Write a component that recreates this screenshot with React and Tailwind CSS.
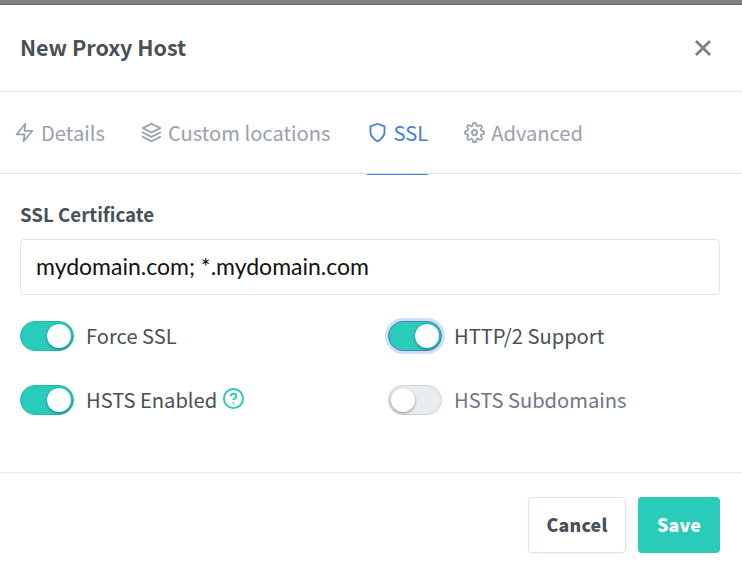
import { FiZap, FiLayers, FiShield, FiSettings, FiHelpCircle } from "react-icons/fi";

function Tab({ icon: Icon, label, active, className }) {
  return (
    <button
      className={`-mb-[2px] flex h-[83px] items-center border-b pb-[1px] text-[20.15px] ${
        active ? "border-[#467fcf] text-[#467fcf]" : "border-transparent text-[#9aa0ac]"
      } ${className}`}
    >
      <Icon className="size-[21px] shrink-0" />
      <span className="mt-[2px] ml-[6px] whitespace-nowrap">{label}</span>
    </button>
  );
}

function Toggle({ label, on, focused, children }) {
  const track = on
    ? focused
      ? "justify-end border-[#467fcf] bg-[#2bcbba] shadow-[0_0_0_3px_rgba(70,127,207,0.25)]"
      : "justify-end border-[#27b7a8] bg-[#2bcbba]"
    : "justify-start border-[#cdd3de] bg-[#e9ecef]";
  return (
    <label className="flex h-[30px] items-center">
      <span className={`flex h-[30px] w-[54px] shrink-0 items-center rounded-full border px-[2px] ${track}`}>
        <span className="mb-px size-6 rounded-full bg-white shadow-[0_1px_3px_rgba(0,0,0,0.4)]" />
      </span>
      <span
        className={`ml-3 whitespace-nowrap text-[20.15px] leading-[30px] ${on ? "text-[#495057]" : "text-[#6e7687]"}`}
      >
        {label}
      </span>
      {children}
    </label>
  );
}

export default function App() {
  return (
    <div className="flex h-[564px] w-[742px] flex-col overflow-hidden bg-white font-['Noto_Sans_CJK_SC',sans-serif] text-[#495057]">
      <div className="h-[5px] shrink-0 border-b border-[#666] bg-[#808080]" />
      <header className="flex h-[87px] shrink-0 items-center justify-between border-b border-[#e9ecef] pr-[31px] pl-5">
        <h1 className="mb-[2px] text-[21.5px] leading-8 font-bold">New Proxy Host</h1>
        <button aria-label="Close">
          <svg className="h-4 w-4" viewBox="0 0 16 16" fill="none" stroke="#808080" strokeWidth="2.8">
            <path d="M1 1 15 15M15 1 1 15" />
          </svg>
        </button>
      </header>
      <nav className="flex h-[82px] shrink-0 border-b border-[#dee2e6] pl-[14px]">
        <Tab icon={FiZap} label="Details" />
        <Tab icon={FiLayers} label="Custom locations" className="ml-[36px]" />
        <Tab icon={FiShield} label="SSL" active className="ml-[36px]" />
        <Tab icon={FiSettings} label="Advanced" className="ml-[36px]" />
      </nav>
      <main className="flex h-[298px] shrink-0 flex-col px-5 pt-[26px]">
        <h2 className="text-[18.7px] leading-[28px] font-bold">SSL Certificate</h2>
        <div className="mt-[11px] mr-[2px] flex h-[56px] items-center rounded-[4px] border border-[#e0e5ec] px-[15px] pb-[2px] font-['Lato',sans-serif] text-[23px] text-[#111]">
          mydomain.com; *.mydomain.com
        </div>
        <div className="mt-[26px] grid grid-cols-[368px_1fr] gap-y-[34px]">
          <Toggle label="Force SSL" on />
          <Toggle label="HTTP/2 Support" on focused />
          <Toggle label="HSTS Enabled" on>
            <FiHelpCircle className="mb-1 ml-[5px] size-[23px] text-[#2bcbba]" />
          </Toggle>
          <Toggle label="HSTS Subdomains" />
        </div>
      </main>
      <footer className="flex flex-1 items-start justify-end gap-3 border-t border-[#e9ecef] pt-6 pr-[22px]">
        <button className="h-[56px] w-[98px] rounded-[4px] border border-[#dee2ee] pb-px text-[17.8px] font-black tracking-[0.2px] shadow-[0_1px_2px_rgba(0,0,0,0.05)]">
          Cancel
        </button>
        <button className="h-[56px] w-[82px] rounded-[4px] bg-[#2bcbba] pb-px text-[17.8px] font-black tracking-[0.2px] text-white">
          Save
        </button>
      </footer>
    </div>
  );
}
